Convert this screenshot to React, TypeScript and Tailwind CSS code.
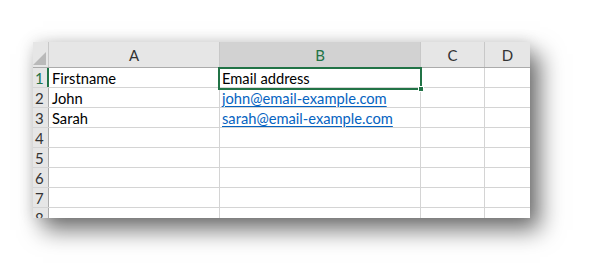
import React from "react";

const cols = [
  { key: "A", w: "w-[171px]" },
  { key: "B", w: "w-[201px]" },
  { key: "C", w: "w-[64px]" },
  { key: "D", w: "w-[46px]" },
];

const rows: { n: number; a?: string; b?: string; link?: boolean }[] = [
  { n: 1, a: "Firstname", b: "Email address" },
  { n: 2, a: "John", b: "john@email-example.com", link: true },
  { n: 3, a: "Sarah", b: "sarah@email-example.com", link: true },
  { n: 4 },
  { n: 5 },
  { n: 6 },
  { n: 7 },
  { n: 8 },
];

export default function App() {
  return (
    <div className="w-[594px] h-[273px] bg-white pl-[33px] pt-[42px]" style={{ fontFamily: "Lato, 'Liberation Sans', sans-serif" }}>
      <div className="relative w-[497px] h-[176px] overflow-hidden bg-white shadow-[10px_12px_22px_rgba(0,0,0,0.55),0_0_14px_rgba(0,0,0,0.12)] text-[14.7px] text-black">
        {/* header row */}
        <div className="flex h-[26px] bg-[#e6e6e6] border-b border-[#ababab]">
          <div className="relative w-[16px] shrink-0 border-r border-[#c8c8c8]">
            <svg className="absolute right-[2px] bottom-[2px]" width="13" height="13" viewBox="0 0 13 13">
              <polygon points="13,0 13,13 0,13" fill="#b9b9b9" />
            </svg>
          </div>
          {cols.map((c) => (
            <div
              key={c.key}
              className={`${c.w} shrink-0 flex items-center justify-center pt-[1px] border-r border-[#c8c8c8] text-[15px] ${
                c.key === "B" ? "bg-[#d2d2d2] text-[#217346]" : "text-[#333]"
              }`}
            >
              {c.key}
            </div>
          ))}
        </div>
        {rows.map((r) => (
          <div key={r.n} className="flex h-[20px] border-b border-[#d4d4d4]">
            <div
              className={`w-[16px] shrink-0 bg-[#e6e6e6] pl-[2px] leading-[20px] text-[15px] ${
                r.n === 1 ? "text-[#217346] border-r-2 border-[#217346]" : "text-[#333] border-r border-[#ababab]"
              }`}
            >
              {r.n}
            </div>
            <div className="w-[171px] shrink-0 border-r border-[#d4d4d4] pl-[3px] leading-[20px] whitespace-nowrap">
              {r.a}
            </div>
            <div className="w-[201px] shrink-0 border-r border-[#d4d4d4] pl-[2px] leading-[20px] whitespace-nowrap">
              {r.link ? (
                <span className="text-[#0563c1] underline underline-offset-2">{r.b}</span>
              ) : (
                r.b
              )}
            </div>
            <div className="w-[64px] shrink-0 border-r border-[#d4d4d4]" />
            <div className="w-[46px] shrink-0" />
          </div>
        ))}
        {/* selection */}
        <div className="absolute left-[185px] top-[25px] w-[204px] h-[23px] border-2 border-[#217346]" />
        <div className="absolute left-[385px] top-[44px] w-[6px] h-[6px] bg-[#217346] border border-white" />
      </div>
    </div>
  );
}
